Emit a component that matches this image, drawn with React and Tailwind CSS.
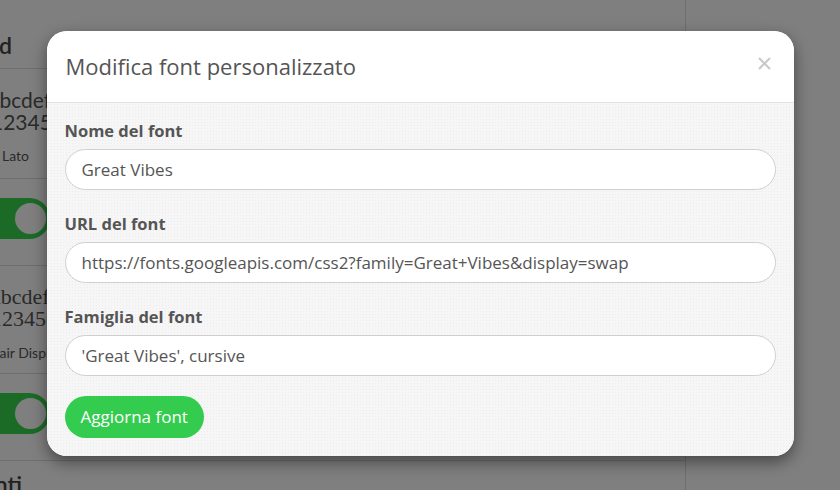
import React, { useState } from "react";

const FONT = { fontFamily: '"Open Sans", "Noto Sans", sans-serif' };
const LATO = { fontFamily: '"Lato", "Open Sans", sans-serif' };
const SERIF = { fontFamily: '"Liberation Serif", "DejaVu Serif", serif' };

// Titolo tagliato a sinistra: finisce a una x precisa
const EdgeHeading = ({ children, end }) => (
  <div className="flex justify-end" style={{ width: end }}>
    <span className="whitespace-nowrap text-[23px] font-semibold text-[#444]" style={LATO}>
      {children}
    </span>
  </div>
);

// Riga font nella lista dietro il modale
const FontRow = ({ label, serif, labelOffset, bottom }) => (
  <div className="border-b border-[#dcdcdc] pt-[20px]" style={{ paddingBottom: bottom }}>
    <div
      className={`text-[#555] whitespace-nowrap leading-[22px] ${serif ? "text-[22px] -ml-[9px]" : "text-[21px] -ml-[11px]"}`}
      style={serif ? SERIF : LATO}
    >
      <div>abcdefg</div>
      <div className={serif ? "" : "ml-[2px]"}>123456</div>
    </div>
    <div className="mt-[13px] text-[14px] leading-[20px] text-[#555] whitespace-nowrap" style={{ ...LATO, marginLeft: labelOffset }}>
      {label}
    </div>
  </div>
);

const Toggle = () => (
  <div className="pt-[19px] pb-[26px] border-b border-[#dcdcdc]">
    <div className="-ml-[60px] flex items-center justify-end w-[110px] h-[41px] rounded-full bg-[#37d64d] pr-[4px]">
      <div className="w-[31px] h-[31px] rounded-full bg-white" />
    </div>
  </div>
);

const Field = ({ label, value, onChange }) => (
  <div className="mb-[22px]">
    <label className="block text-[16.5px] leading-[24px] font-bold text-[#555] mb-[6px]">{label}</label>
    <input
      type="text"
      value={value}
      onChange={(e) => onChange(e.target.value)}
      className="w-full h-[41px] rounded-full border border-[#cfcfcf] bg-white px-[16px] text-[17px] text-[#555] outline-none"
      style={FONT}
    />
  </div>
);

export default function App() {
  const [name, setName] = useState("Great Vibes");
  const [url, setUrl] = useState("https://fonts.googleapis.com/css2?family=Great+Vibes&display=swap");
  const [family, setFamily] = useState("'Great Vibes', cursive");

  return (
    <div className="relative h-[490px] overflow-hidden bg-white" style={FONT}>
      {/* --- PAGINA DIETRO --- */}
      <div className="flex h-full">
        <div className="w-[686px] border-r border-[#dcdcdc] overflow-hidden">
          <div className="h-[69px] border-b border-[#dcdcdc] pt-[28px]">
            <EdgeHeading end={12}>Font standard</EdgeHeading>
          </div>
          <FontRow label="Lato" labelOffset={2} bottom={12} />
          <Toggle />
          <FontRow label="Playfair Display" labelOffset={-31} bottom={10} serif />
          <Toggle />
          <div className="pt-[6px]">
            <EdgeHeading end={22}>Font aggiunti</EdgeHeading>
          </div>
        </div>
        <div className="flex-1" />
      </div>

      {/* --- MODALE --- */}
      <div className="absolute inset-0 bg-black/50 flex justify-center pt-[31px]">
        <div className="w-[747px] h-[425px] rounded-[20px] overflow-hidden bg-[#f6f6f6] shadow-[0_6px_16px_rgba(0,0,0,0.45)] flex flex-col">
          <div className="h-[72px] shrink-0 bg-white border-b border-[#e3e3e3] flex items-center justify-between px-[19px]">
            <h2 className="text-[22px] text-[#555] font-normal">Modifica font personalizzato</h2>
            <button className="text-[#c8c8c8] mr-[4px] -mt-[7px]" aria-label="Chiudi">
              <svg width="13" height="13" viewBox="0 0 13 13">
                <path d="M1 1 L12 12 M12 1 L1 12" stroke="currentColor" strokeWidth="2" />
              </svg>
            </button>
          </div>
          <div className="flex-1 px-[18px] pt-[16px] bg-[#f6f6f6] bg-[radial-gradient(#ececec_0.6px,transparent_0.8px)] bg-[length:3px_3px]">
            <Field label="Nome del font" value={name} onChange={setName} />
            <Field label="URL del font" value={url} onChange={setUrl} />
            <Field label="Famiglia del font" value={family} onChange={setFamily} />
            <button className="-mt-[2px] h-[42px] px-[16px] rounded-full bg-[#33cc4f] text-white text-[17px]">
              Aggiorna font
            </button>
          </div>
        </div>
      </div>
    </div>
  );
}
